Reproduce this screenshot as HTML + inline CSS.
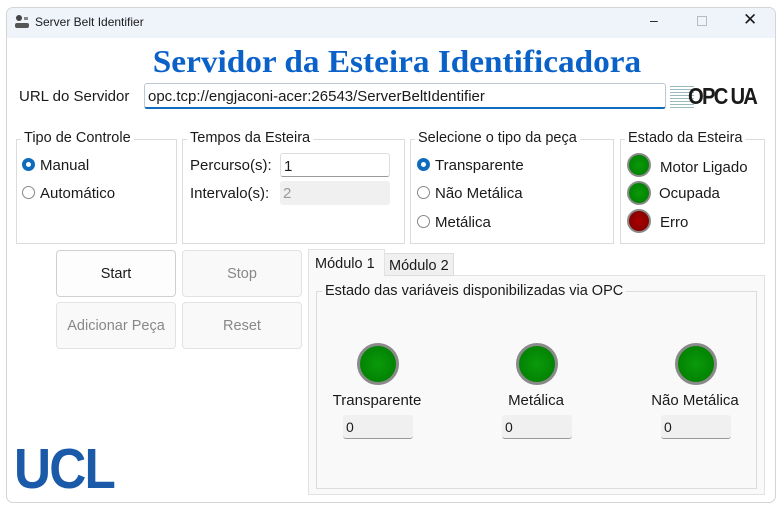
<!DOCTYPE html>
<html><head><meta charset="utf-8"><style>
*{box-sizing:border-box;margin:0;padding:0}
body{width:781px;height:507px;background:#fff;font-family:"Liberation Sans",sans-serif;font-size:14px;color:#1a1a1a;position:relative;overflow:hidden}
.a{position:absolute;white-space:nowrap}
.win{position:absolute;left:6px;top:7px;width:770px;height:496px;border:1px solid #d4d4d4;border-radius:7px;background:#fff;overflow:hidden}
.tb{position:absolute;left:0;top:0;width:100%;height:30px;background:#eff3fa}
.gb{position:absolute;border:1px solid #dcdcdc}
.gt{position:absolute;background:#fff;padding:0 3px;top:-10px;left:4px;font-size:14.5px}
.rad{position:absolute;width:13px;height:13px;border-radius:50%;border:1px solid #888;background:#fff}
.rad.on{border:4px solid #0f6cbd}
.led{position:absolute;border-radius:50%;background:radial-gradient(circle,#0a9a0a,#007a00);border:2px solid #8a8a8a}
.btn{position:absolute;border:1px solid #e2e2e2;border-radius:4px;background:#f9f9f9;color:#888;text-align:center;font-size:14.5px}
.inp{position:absolute;background:#f0f0f0;border-bottom:1px solid #999;border-radius:3px;padding-left:3px;font-size:14px}
</style></head><body>
<div class="win">
<div class="tb"></div>
</div>
<svg class="a" style="left:14px;top:15px" width="16" height="14"><circle cx="5" cy="3" r="3" fill="#444"/><rect x="10" y="2" width="4" height="3" fill="#888"/><rect x="1" y="8" width="14" height="5" rx="2" fill="#555"/></svg>
<div class="a" style="left:35px;top:15px;font-size:12px">Server Belt Identifier</div>
<div class="a" style="left:650px;top:12px;font-size:14px">–</div>
<div class="a" style="left:697px;top:16px;width:10px;height:10px;border:1px solid #bbb"></div>
<div class="a" style="left:743px;top:10px;font-size:17px">✕</div>

<div class="a" style="left:130px;top:43px;width:534px;text-align:center;font-family:'Liberation Serif',serif;font-weight:bold;font-size:32px;color:#0a62c9;transform:scaleX(1.04)">Servidor da Esteira Identificadora</div>
<div class="a" style="left:19px;top:88px;font-size:15px">URL do Servidor</div>
<div class="a" style="left:144px;top:83px;width:522px;height:26px;border:1px solid #bcc8d8;border-bottom:2px solid #0f6cbd;border-radius:3px;padding:4px 0 0 3px;font-size:15px">opc.tcp://engjaconi-acer:26543/ServerBeltIdentifier</div>
<div class="a" style="left:670px;top:84px;width:24px;height:24px;background:repeating-linear-gradient(#fff 0 2px,#9bb 2px 3px)"></div>
<div class="a" style="left:688px;top:83px;font-weight:bold;font-size:23px;letter-spacing:-2px;transform:scaleX(.88);transform-origin:left">OPC UA</div>

<div class="gb" style="left:16px;top:139px;width:161px;height:105px"><div class="gt">Tipo de Controle</div></div>
<div class="rad on" style="left:22px;top:158px"></div><div class="a" style="left:40px;top:157px;font-size:15px">Manual</div>
<div class="rad" style="left:22px;top:186px"></div><div class="a" style="left:40px;top:185px;font-size:15px">Automático</div>

<div class="gb" style="left:182px;top:139px;width:223px;height:105px"><div class="gt">Tempos da Esteira</div></div>
<div class="a" style="left:190px;top:157px;font-size:15px">Percurso(s):</div>
<div class="a" style="left:280px;top:153px;width:110px;height:24px;border:1px solid #ddd;border-bottom:1px solid #999;border-radius:3px;padding:4px 0 0 3px;font-size:15px">1</div>
<div class="a" style="left:190px;top:185px;font-size:15px">Intervalo(s):</div>
<div class="a" style="left:280px;top:181px;width:110px;height:24px;background:#f0f0f0;border-radius:3px;padding:4px 0 0 3px;color:#999;font-size:15px">2</div>

<div class="gb" style="left:410px;top:139px;width:204px;height:105px"><div class="gt">Selecione o tipo da peça</div></div>
<div class="rad on" style="left:417px;top:158px"></div><div class="a" style="left:435px;top:157px;font-size:15px">Transparente</div>
<div class="rad" style="left:417px;top:186px"></div><div class="a" style="left:435px;top:185px;font-size:15px">Não Metálica</div>
<div class="rad" style="left:417px;top:215px"></div><div class="a" style="left:435px;top:214px;font-size:15px">Metálica</div>

<div class="gb" style="left:620px;top:139px;width:145px;height:105px"><div class="gt">Estado da Esteira</div></div>
<div class="led" style="left:627px;top:153px;width:24px;height:24px"></div><div class="a" style="left:660px;top:159px;font-size:15px">Motor Ligado</div>
<div class="led" style="left:627px;top:181px;width:24px;height:24px"></div><div class="a" style="left:659px;top:185px;font-size:15px">Ocupada</div>
<div class="led" style="left:627px;top:209px;width:24px;height:24px;background:radial-gradient(circle,#a00,#7a0000)"></div><div class="a" style="left:660px;top:214px;font-size:15px">Erro</div>

<div class="btn" style="left:56px;top:250px;width:120px;height:47px;line-height:47px;color:#1a1a1a;background:#fdfdfd;border-color:#d0d0d0">Start</div>
<div class="btn" style="left:182px;top:250px;width:120px;height:47px;line-height:47px">Stop</div>
<div class="btn" style="left:56px;top:302px;width:120px;height:47px;line-height:47px">Adicionar Peça</div>
<div class="btn" style="left:182px;top:302px;width:120px;height:47px;line-height:47px">Reset</div>

<div class="a" style="left:308px;top:275px;width:457px;height:220px;background:#f9f9f9;border:1px solid #e2e2e2"></div>
<div class="a" style="left:384px;top:253px;width:70px;height:23px;background:#f0f0f0;border:1px solid #ddd;padding:4px 0 0 4px;font-size:14.5px">Módulo 2</div>
<div class="a" style="left:308px;top:249px;width:77px;height:27px;background:#f9f9f9;border:1px solid #e2e2e2;border-bottom:none;padding:6px 0 0 6px;font-size:14.5px">Módulo 1</div>
<div class="a" style="left:316px;top:291px;width:441px;height:198px;border:1px solid #dcdcdc"></div>
<div class="a" style="left:322px;top:283px;background:#f9f9f9;padding:0 3px;font-size:14.5px">Estado das variáveis disponibilizadas via OPC</div>

<div class="led" style="left:357px;top:343px;width:42px;height:42px;border-width:3px"></div>
<div class="led" style="left:516px;top:343px;width:42px;height:42px;border-width:3px"></div>
<div class="led" style="left:675px;top:343px;width:42px;height:42px;border-width:3px"></div>
<div class="a" style="left:297px;top:392px;width:160px;text-align:center;font-size:15px">Transparente</div>
<div class="a" style="left:456px;top:392px;width:160px;text-align:center;font-size:15px">Metálica</div>
<div class="a" style="left:615px;top:392px;width:160px;text-align:center;font-size:15px">Não Metálica</div>
<div class="inp" style="left:343px;top:415px;width:70px;height:24px;padding-top:4px">0</div>
<div class="inp" style="left:502px;top:415px;width:70px;height:24px;padding-top:4px">0</div>
<div class="inp" style="left:661px;top:415px;width:70px;height:24px;padding-top:4px">0</div>

<div class="a" style="left:14px;top:441px;font-weight:bold;font-size:57px;color:#1a5aa8;letter-spacing:-2px;line-height:56px;transform:scaleX(.9);transform-origin:left">UCL</div>
</body></html>
